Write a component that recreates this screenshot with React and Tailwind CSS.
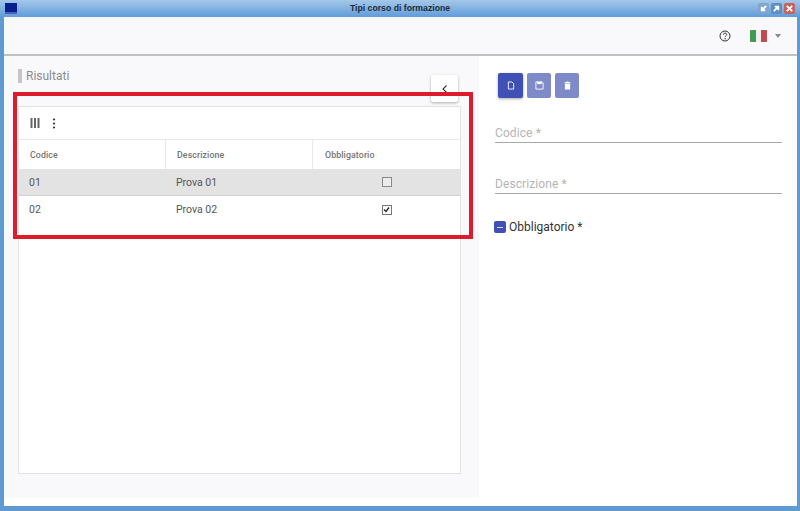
import React from "react";

const font = { fontFamily: "Roboto, sans-serif" };

function WinBtn({ bg, children }) {
  return (
    <div className={`w-[11px] h-[11px] rounded-[2px] flex items-center justify-center ${bg}`}>
      <svg width="9" height="9" viewBox="0 0 10 10" fill="none" stroke="#fff" strokeWidth="2">
        {children}
      </svg>
    </div>
  );
}

function ActionBtn({ active, children }) {
  return (
    <button
      className={`h-[25px] flex items-center justify-center rounded-[2px] ${
        active ? "w-[25px] bg-[#3f51b5] shadow-[0_1px_3px_rgba(0,0,0,0.35)]" : "w-[24px] bg-[#7f8bc9]"
      }`}
    >
      {children}
    </button>
  );
}

function Field({ label, className }) {
  return (
    <div className={`h-[20px] pt-[2px] border-b border-[#a8a8a8] text-[12px] leading-[16px] text-[#b5b5b5] tracking-[0.1px] ${className}`}>
      {label}
    </div>
  );
}

export default function App() {
  return (
    <div className="relative w-[800px] h-[511px] overflow-hidden flex flex-col bg-[#5f9bd3] font-['Roboto',sans-serif]" style={font}>
      {/* Title bar */}
      <div className="h-[17px] shrink-0 grid grid-cols-[1fr_auto_1fr] items-center bg-gradient-to-b from-[#a4c8e8] to-[#5f9cd8]">
        <div className="ml-[5px] w-[12px] h-[11px] bg-[#0a1f8f] border-b-2 border-[#4a5fb8]" />
        <div className="text-[8.7px] font-bold text-[#1c2a3a] font-['Liberation_Sans',sans-serif]">
          Tipi corso di formazione
        </div>
        <div className="flex gap-[2px] mr-[5px] justify-end">
          <WinBtn bg="bg-[#7fa6cc]">
            <path d="M8 2 3 7M3 3v4h4" />
          </WinBtn>
          <WinBtn bg="bg-[#5f8fc0]">
            <path d="M2 8 7 3M3 3h4v4" />
          </WinBtn>
          <WinBtn bg="bg-[#c9625c]">
            <path d="M2 2l6 6M8 2 2 8" />
          </WinBtn>
        </div>
      </div>

      {/* Window body */}
      <div className="flex-1 flex flex-col ml-[4px] mr-[3px] mb-[5px] bg-white min-h-0">
        {/* Header */}
        <div className="h-[39px] shrink-0 flex items-center justify-end bg-[#f9f9fc] border-b-2 border-[#c2c2c2]">
          <svg width="12" height="12" viewBox="0 0 12 12" className="mr-[19px]">
            <circle cx="6" cy="6" r="5" fill="none" stroke="#333" strokeWidth="1" />
            <path d="M4.4 4.7c0-2.1 3.3-2.1 3.3-.1 0 1.2-1.6 1.2-1.6 2.5" fill="none" stroke="#333" strokeWidth="1" />
            <circle cx="6.1" cy="8.7" r=".7" fill="#333" />
          </svg>
          <div className="flex w-[17px] h-[12px] mr-[8px] rounded-[1px] overflow-hidden">
            <div className="flex-1 bg-[#3f9a50]" />
            <div className="flex-1 bg-[#f0f0f0]" />
            <div className="flex-1 bg-[#c04a52]" />
          </div>
          <div className="w-0 h-0 mr-[16px] border-x-[3px] border-x-transparent border-t-[4px] border-t-[#8a8a8a]" />
        </div>

        <div className="flex-1 flex min-h-0 pb-[8px]">
          {/* Left panel */}
          <div className="w-[475px] shrink-0 bg-[#f9f9fc] flex flex-col pl-[14px] pr-[18px] pt-[13px] pb-[24px]">
            <div className="flex items-center justify-between h-[37px] shrink-0 relative">
              <div className="self-start flex items-center h-[14px] border-l-[4px] border-[#c5c5c8] pl-[4px] text-[12px] text-[#8c8c8c]">
                Risultati
              </div>
              <button className="absolute right-[3px] top-[6px] w-[27px] h-[27px] bg-white flex items-center justify-center rounded-[2px] shadow-[0_1px_3px_rgba(0,0,0,0.3)]">
                <svg width="8" height="10" viewBox="0 0 8 10" fill="none" stroke="#333" strokeWidth="1.1">
                  <path d="M5.5 1.5 2 5l3.5 3.5" />
                </svg>
              </button>
            </div>

            <div className="flex-1 bg-white border border-[#e2e2e2] flex flex-col">
              {/* Table toolbar */}
              <div className="h-[33px] shrink-0 flex items-center pl-[11px] gap-[12px] border-b border-[#e8e8e8]">
                <svg width="10" height="10" viewBox="0 0 10 10" fill="#666">
                  <rect x="0.5" y="0" width="2" height="10" />
                  <rect x="4" y="0" width="2" height="10" />
                  <rect x="7.5" y="0" width="2" height="10" />
                </svg>
                <svg width="4" height="11" viewBox="0 0 4 11" fill="#333">
                  <circle cx="2" cy="1.5" r="1.1" />
                  <circle cx="2" cy="5.5" r="1.1" />
                  <circle cx="2" cy="9.5" r="1.1" />
                </svg>
              </div>

              {/* Table head */}
              <div className="h-[29px] shrink-0 grid grid-cols-[147px_147px_1fr] text-[8.8px] font-medium text-[#757575] tracking-[0.1px]">
                <div className="flex items-center pt-[2px] pl-[11px] border-r border-[#e8e8e8]">Codice</div>
                <div className="flex items-center pt-[2px] pl-[11px] border-r border-[#e8e8e8]">Descrizione</div>
                <div className="flex items-center pt-[2px] pl-[12px]">Obbligatorio</div>
              </div>

              {/* Rows */}
              <div className="h-[27px] shrink-0 grid grid-cols-[147px_147px_1fr] items-center bg-[#e3e3e3] border-b border-[#cfcfcf] text-[10.5px] text-[#555] pt-[1px]">
                <div className="pl-[10px]">01</div>
                <div className="pl-[10px]">Prova 01</div>
                <div className="flex justify-center">
                  <div className="w-[10px] h-[10px] border border-[#8a8a8a] bg-[#ececec] mb-[1px]" />
                </div>
              </div>
              <div className="h-[27px] shrink-0 grid grid-cols-[147px_147px_1fr] items-center text-[10.5px] text-[#555] bg-white pt-[1px]">
                <div className="pl-[10px]">02</div>
                <div className="pl-[10px]">Prova 02</div>
                <div className="flex justify-center">
                  <div className="w-[10px] h-[10px] border border-[#777] flex items-center justify-center mb-[1px]">
                    <svg width="7" height="7" viewBox="0 0 7 7" fill="none" stroke="#222" strokeWidth="1.3">
                      <path d="M1 3.5 3 5.5 6 1.5" />
                    </svg>
                  </div>
                </div>
              </div>
            </div>
          </div>

          {/* Right panel */}
          <div className="flex-1 flex flex-col bg-white pl-[16px] pr-[15px] pt-[17px]">
            <div className="flex gap-[4px] pl-[3px]">
              <ActionBtn active>
                <svg width="8" height="9" viewBox="0 0 9 10" fill="none" stroke="#fff" strokeWidth="1">
                  <path d="M1.5 1h4l2 2v6h-6z" />
                </svg>
              </ActionBtn>
              <ActionBtn>
                <svg width="9" height="9" viewBox="0 0 10 10" fill="none" stroke="#fff" strokeWidth="1">
                  <path d="M1 1h7l1 1v7H1z" />
                  <path d="M3 1v2h4V1" fill="#fff" />
                </svg>
              </ActionBtn>
              <ActionBtn>
                <svg width="7" height="9" viewBox="0 0 8 10" fill="#fff">
                  <path d="M1 3h6v6.5H1zM0.5 1.2h2l.5-.7h2l.5.7h2V2.3h-7z" />
                </svg>
              </ActionBtn>
            </div>

            <Field label="Codice *" className="mt-[25px]" />
            <Field label="Descrizione *" className="mt-[31px]" />

            <div className="flex items-center gap-[3px] mt-[26px] -ml-[1px]">
              <div className="w-[12px] h-[12px] rounded-[2px] bg-[#3f51b5] flex items-center justify-center">
                <div className="w-[6px] h-[1px] bg-[#d5d9f0]" />
              </div>
              <span className="text-[12px] text-[#333] leading-[14px]">Obbligatorio *</span>
            </div>
          </div>
        </div>
      </div>

      {/* Red annotation frame drawn over the screenshot */}
      <div className="absolute left-[13px] top-[92px] w-[460px] h-[147px] border-[4px] border-[#dc1c2c] pointer-events-none" />
    </div>
  );
}
